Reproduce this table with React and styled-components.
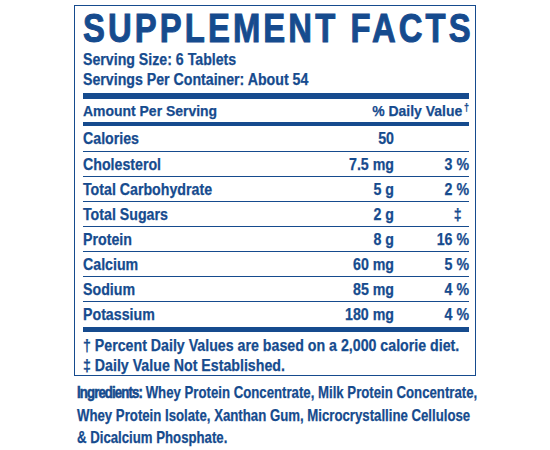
import React from "react";
import styled, { createGlobalStyle } from "styled-components";

const BLUE = "#164b8e";
const FONT = '"Liberation Sans", Arial, sans-serif';

const Global = createGlobalStyle`
  html, body { margin: 0; padding: 0; background: #fff; overflow: hidden; }
  body { font-family: ${FONT}; color: ${BLUE}; -webkit-text-stroke: 0.25px ${BLUE}; }
`;

const Page = styled.div`
  width: 550px;
  height: 450px;
  padding: 5px 0 0 74px;
  box-sizing: border-box;
  overflow: hidden;
`;

const Panel = styled.div`
  width: 402px;
  box-sizing: border-box;
  border: 1.5px solid ${BLUE};
  padding: 0 6px 0 8px;
`;

const Title = styled.h1`
  margin: 0;
  font-size: 40px;
  line-height: 44px;
  font-weight: 700;
  letter-spacing: 3.8px;
  white-space: nowrap;
  -webkit-text-stroke: 1px ${BLUE};
  transform: scaleX(0.82);
  transform-origin: left center;
`;

const ServingLine = styled.div`
  font-size: 16px;
  font-weight: 700;
  line-height: 20px;
  white-space: nowrap;
  transform: scaleX(0.885);
  transform-origin: left center;
`;

const Rule = styled.div`
  height: ${(p) => p.$h}px;
  background: ${BLUE};
  margin-top: ${(p) => p.$mt || 0}px;
`;

const Row = styled.div`
  display: grid;
  grid-template-columns: 1fr 90px 75px;
  align-items: center;
  height: ${(p) => (p.$header ? 23 : 25)}px;
  font-size: ${(p) => (p.$header ? 15.5 : 16.5)}px;
  font-weight: 700;
  border-top: ${(p) => (p.$first || p.$header ? "none" : `1px solid ${BLUE}`)};
  box-sizing: border-box;
`;

const Cell = styled.span`
  display: block;
  text-align: ${(p) => (p.$right ? "right" : "left")};
  white-space: nowrap;
  transform: scaleX(${(p) => p.$k || 0.86});
  transform-origin: ${(p) => (p.$right ? "right" : "left")} center;
`;

const HeaderRight = styled(Cell)`
  grid-column: 2 / 4;
`;

const Sup = styled.sup`
  font-size: 10px;
  vertical-align: 5px;
  line-height: 0;
  margin-left: 2px;
`;

const Dagger = styled.span`
  display: inline-block;
  width: 26px;
  text-align: center;
`;

const Foot = styled.div`
  font-size: 16.5px;
  font-weight: 700;
  line-height: 20px;
  white-space: nowrap;
  transform: scaleX(0.86);
  transform-origin: left center;
`;

const FootBlock = styled.div`
  padding: 3px 0 0;
`;

const Ingredients = styled.p`
  margin: 5px 0 0 3px;
  font-size: 16.5px;
  line-height: 22.5px;
  font-weight: 700;
  white-space: nowrap;
  transform: scaleX(0.8);
  transform-origin: left top;
`;

const IngLabel = styled.span`
  -webkit-text-stroke: 0.6px ${BLUE};
  letter-spacing: -1.1px;
`;

const rows = [
  ["Calories", "50", ""],
  ["Cholesterol", "7.5 mg", "3 %"],
  ["Total Carbohydrate", "5 g", "2 %"],
  ["Total Sugars", "2 g", "‡"],
  ["Protein", "8 g", "16 %"],
  ["Calcium", "60 mg", "5 %"],
  ["Sodium", "85 mg", "4 %"],
  ["Potassium", "180 mg", "4 %"],
];

export default function App() {
  return (
    <>
      <Global />
      <Page>
        <Panel>
          <Title>SUPPLEMENT FACTS</Title>
          <ServingLine>Serving Size: 6 Tablets</ServingLine>
          <ServingLine>Servings Per Container: About 54</ServingLine>
          <Rule $h={6} $mt={3} />
          <Row $header>
            <Cell $k={0.9}>Amount Per Serving</Cell>
            <HeaderRight $right $k={0.9}>
              % Daily Value<Sup>†</Sup>
            </HeaderRight>
          </Row>
          <Rule $h={4} />
          {rows.map(([name, amt, dv], i) => (
            <Row key={name} $first={i === 0}>
              <Cell>{name}</Cell>
              <Cell $right>{amt}</Cell>
              <Cell $right>{dv === "‡" ? <Dagger>‡</Dagger> : dv}</Cell>
            </Row>
          ))}
          <Rule $h={5} $mt={1} />
          <FootBlock>
            <Foot>† Percent Daily Values are based on a 2,000 calorie diet.</Foot>
            <Foot>‡ Daily Value Not Established.</Foot>
          </FootBlock>
        </Panel>
        <Ingredients>
          <IngLabel>Ingredients:</IngLabel> Whey Protein Concentrate, Milk Protein Concentrate,
          <br />
          Whey Protein Isolate, Xanthan Gum, Microcrystalline Cellulose
          <br />
          &amp; Dicalcium Phosphate.
        </Ingredients>
      </Page>
    </>
  );
}
